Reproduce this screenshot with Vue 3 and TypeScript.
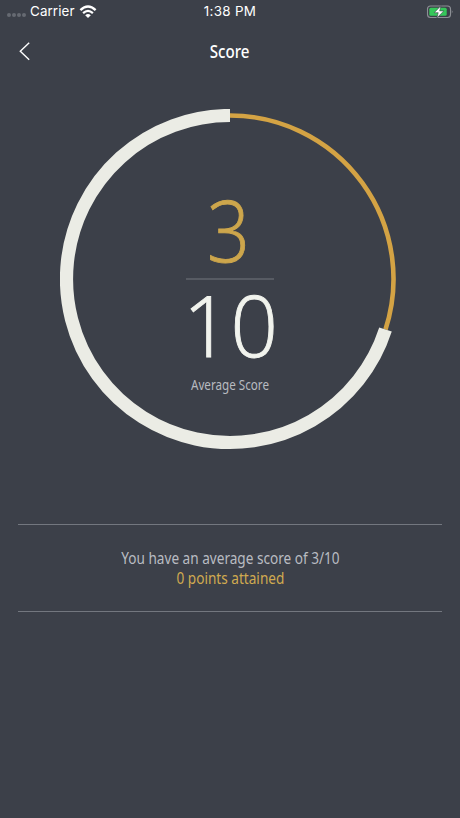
<script setup lang="ts">
const score: number = 3
const total: number = 10
const points: number = 0

const radius = 163.5
const center = 170
const angle = (score / total) * Math.PI * 2
const endX = center + radius * Math.sin(angle)
const endY = center - radius * Math.cos(angle)
const attainedArc = `M${center} ${center - radius}A${radius} ${radius} 0 0 1 ${endX} ${endY}`
const remainingArc = `M${endX} ${endY}A${radius} ${radius} 0 1 1 ${center} ${center - radius}`
</script>

<template>
  <main class="screen">
    <header class="status">
      <div class="network">
        <span class="signal"><i v-for="n in 4" :key="n" /></span>
        <span class="carrier">Carrier</span>
        <svg class="wifi" width="18" height="14" viewBox="0 0 18 14" fill="none">
          <path d="M1.4 5.1Q9-1.9 16.6 5.1" stroke="#fff" stroke-width="2.4" />
          <path d="M4.1 8.1Q9 3.6 13.9 8.1" stroke="#fff" stroke-width="2.2" />
          <path d="M6.2 10.2Q9 7.8 11.8 10.2L9 13Z" fill="#fff" />
        </svg>
      </div>
      <span class="clock">1:38 PM</span>
      <div class="power">
        <svg width="28" height="14" viewBox="0 0 28 14">
          <rect x="1.5" y="1" width="23" height="11.5" rx="3" fill="none" stroke="#8d9096" stroke-width="1.1" />
          <rect x="3.3" y="2.7" width="17.4" height="8.1" rx="1.5" fill="#35c75a" />
          <path d="M25.8 5Q27.5 6.8 25.8 8.6Z" fill="#8d9096" />
          <path d="M14.9 .8L8.2 7.7H12.2L10.9 13L17.8 5.9H13.7Z" fill="#fff" stroke="#3c4049" stroke-width=".6" />
        </svg>
      </div>
    </header>
    <nav class="navbar">
      <svg class="back" width="12" height="20" viewBox="0 0 12 20" fill="none">
        <path d="M10.2 1.7L1.3 10.2L10.2 18.7" stroke="#fff" stroke-width="1.4" />
      </svg>
      <h1 class="title">Score</h1>
      <span />
    </nav>
    <section class="dial">
      <svg width="340" height="341" viewBox="0 0 340 341">
        <path :d="attainedArc" fill="none" stroke="#d4a344" stroke-width="4.6" />
        <path :d="remainingArc" fill="none" stroke="#ebece5" stroke-width="13.2" />
        <g class="digits">
          <text class="gold" x="147" y="152.5" textLength="43" lengthAdjust="spacingAndGlyphs">{{ score }}</text>
          <text x="123" y="248" textLength="95" lengthAdjust="spacingAndGlyphs">{{ total }}</text>
        </g>
        <path d="M126 170H214" stroke="#73777e" stroke-width="1.2" />
        <text class="caption" x="131" y="280.5" textLength="78" lengthAdjust="spacingAndGlyphs">Average Score</text>
      </svg>
    </section>
    <section class="summary">
      <p><span class="sentence">You have an average score of {{ score }}/{{ total }}</span></p>
      <p class="attained"><span class="sentence">{{ points }} points attained</span></p>
    </section>
  </main>
</template>

<style>
body {
  background: #3c4049;
}
</style>

<style scoped>
.screen {
  width: 460px;
  height: 818px;
  overflow: hidden;
  background: #3c4049;
  color: #fff;
  font-family: "Noto Sans", sans-serif;
}
.status {
  display: grid;
  grid-template-columns: 1fr auto 1fr;
  align-items: center;
  height: 23px;
  font: 13.4px/23px Inter, sans-serif;
}
.network {
  display: flex;
  align-items: center;
  padding-left: 7px;
}
.signal {
  display: flex;
  gap: 1px;
  width: 23px;
  padding-top: 7px;
}
.signal i {
  width: 4px;
  height: 4px;
  border-radius: 50%;
  background: #666a72;
}
.carrier {
  letter-spacing: 0.1px;
}
.wifi {
  margin-left: 4px;
}
.clock {
  letter-spacing: 0.3px;
}
.power {
  display: flex;
  justify-content: flex-end;
  padding-right: 6px;
}
.navbar {
  display: grid;
  grid-template-columns: 1fr auto 1fr;
  align-items: center;
  height: 56px;
}
.back {
  margin-left: 19px;
}
.title {
  margin: 0;
  font-size: 18px;
  font-weight: 500;
  line-height: 24px;
  transform: scaleX(0.84);
}
.dial {
  display: flex;
  justify-content: center;
  padding-top: 30px;
}
.digits {
  fill: #f1f3ed;
  stroke: #f1f3ed;
  stroke-width: 0.9px;
  font: 300 84.5px "Open Sans", sans-serif;
}
.digits .gold {
  fill: #cda64c;
  stroke: #cda64c;
}
.caption {
  fill: #b8bbc0;
  font-size: 13.5px;
}
.summary {
  box-sizing: border-box;
  height: 88px;
  margin: 74px 18px 0;
  padding-top: 23px;
  border-top: 1px solid #73777f;
  border-bottom: 1px solid #73777f;
  color: #b9bcc2;
  text-align: center;
}
.summary p {
  margin: 0;
  font-size: 16px;
  line-height: 20px;
}
.sentence {
  display: inline-block;
  transform: scaleX(0.85);
}
.summary .attained {
  color: #d0aa50;
}
</style>
